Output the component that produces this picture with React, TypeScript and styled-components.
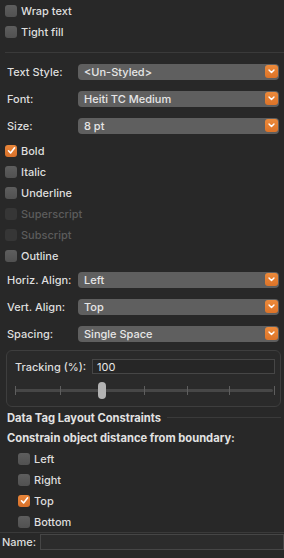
import React from "react";
import styled, { createGlobalStyle } from "styled-components";

const GlobalStyle = createGlobalStyle`
  html, body {
    margin: 0;
    padding: 0;
    background: #282828;
    overflow: hidden;
  }
  body {
    font-family: Inter, "Liberation Sans", sans-serif;
    font-size: 11px;
    color: #dedede;
  }
`;

const Panel = styled.div`
  width: 284px;
  height: 558px;
  display: flex;
  flex-direction: column;
  background: #282828;
  white-space: nowrap;
`;

const CheckRow = styled.label<{ $indent?: number; $disabled?: boolean; $h?: number }>`
  height: ${(p) => p.$h ?? 21}px;
  flex-shrink: 0;
  display: flex;
  align-items: center;
  gap: 4px;
  padding-left: ${(p) => p.$indent ?? 5}px;
  color: ${(p) => (p.$disabled ? "#5c5c5c" : "#dedede")};
  font-weight: 500;
`;

const Box = styled.span<{ $checked?: boolean; $disabled?: boolean }>`
  width: 12px;
  height: 12px;
  border-radius: 3px;
  box-sizing: border-box;
  display: flex;
  align-items: center;
  justify-content: center;
  background: ${(p) =>
    p.$checked
      ? "linear-gradient(#e8863a, #d8702a)"
      : p.$disabled
      ? "#363636"
      : "linear-gradient(#5e5e5e, #515151)"};
`;

const Separator = styled.div<{ $top?: number; $bottom?: number; $left?: number }>`
  height: 1px;
  flex-shrink: 0;
  background: #3a3a3a;
  margin: ${(p) => p.$top ?? 0}px 0 ${(p) => p.$bottom ?? 0}px ${(p) => p.$left ?? 0}px;
`;

const Spacer = styled.div<{ $h: number }>`
  height: ${(p) => p.$h}px;
  flex-shrink: 0;
`;

const FieldRow = styled.div`
  height: 27px;
  flex-shrink: 0;
  display: flex;
  align-items: center;
  padding: 0 5px 0 7px;
`;

const FieldLabel = styled.span`
  width: 71px;
  flex-shrink: 0;
  font-weight: 500;
`;

const Popup = styled.div`
  flex: 1;
  height: 16px;
  border-radius: 4px;
  background: #5f5f5f;
  display: flex;
  align-items: center;
  padding-left: 6px;
  padding-right: 1.5px;
  font-weight: 500;
  color: #e6e6e6;
`;

const PopupText = styled.span`
  flex: 1;
`;

const Arrow = styled.span`
  width: 13px;
  height: 13px;
  border-radius: 3px;
  background: linear-gradient(#ec8a3b, #dc7328);
  display: flex;
  align-items: center;
  justify-content: center;
`;

const TrackBox = styled.div`
  margin: 3px 3px 0 6px;
  height: 57px;
  flex-shrink: 0;
  box-sizing: border-box;
  border: 1px solid #3e3e3e;
  border-radius: 6px;
  background: #2a2a2a;
  padding: 8px 5px 0 8px;
  display: flex;
  flex-direction: column;
`;

const TrackRow = styled.div`
  display: flex;
  align-items: center;
  height: 15px;
`;

const TrackLabel = styled.span`
  width: 77px;
  flex-shrink: 0;
  font-weight: 500;
`;

const TextInput = styled.div<{ $bg?: string; $h?: number }>`
  flex: 1;
  height: ${(p) => p.$h ?? 15}px;
  box-sizing: border-box;
  border: 1px solid #464646;
  background: ${(p) => p.$bg ?? "#262626"};
  display: flex;
  align-items: center;
  padding-left: 4px;
  color: #e6e6e6;
`;

const Slider = styled.div`
  position: relative;
  height: 17px;
  margin: 8px 2px 0 0;
`;

const Track = styled.div`
  position: absolute;
  left: 0;
  right: 0;
  top: 7px;
  height: 3px;
  border-radius: 2px;
  background: #474747;
`;

const Tick = styled.div`
  position: absolute;
  top: 4px;
  width: 1px;
  height: 9px;
  background: #5e5e5e;
`;

const Thumb = styled.div`
  position: absolute;
  top: 0;
  width: 8px;
  height: 17px;
  border-radius: 4px;
  background: #b3b3b3;
`;

const Heading = styled.div<{ $h?: number }>`
  height: ${(p) => p.$h ?? 21}px;
  flex-shrink: 0;
  display: flex;
  align-items: center;
  gap: 6px;
  padding: 0 3px 0 7px;
  font-size: 11.2px;
  font-weight: 700;
  color: #e2e2e2;
`;

const HeadingLine = styled.div`
  flex: 1;
  height: 1px;
  background: #3a3a3a;
`;

const NameRow = styled.div`
  display: flex;
  align-items: center;
  height: 17px;
  flex-shrink: 0;
  padding-left: 2px;
  gap: 4px;
  font-weight: 500;
`;

const Check = () => (
  <svg width="9" height="9" viewBox="0 0 9 9">
    <path d="M1.5 4.8 L3.6 7 L7.6 1.8" fill="none" stroke="#fff" strokeWidth="1.6" strokeLinecap="round" strokeLinejoin="round" />
  </svg>
);

const Chevron = () => (
  <svg width="7" height="5" viewBox="0 0 7 5">
    <path d="M1 1 L3.5 3.6 L6 1" fill="none" stroke="#fff" strokeWidth="1.4" strokeLinecap="round" strokeLinejoin="round" />
  </svg>
);

const CheckItem = ({
  label,
  checked,
  disabled,
  indent,
  h,
}: {
  label: string;
  checked?: boolean;
  disabled?: boolean;
  indent?: number;
  h?: number;
}) => (
  <CheckRow $indent={indent} $disabled={disabled} $h={h}>
    <Box $checked={checked} $disabled={disabled}>{checked && <Check />}</Box>
    {label}
  </CheckRow>
);

const Field = ({ label, value }: { label: string; value: string }) => (
  <FieldRow>
    <FieldLabel>{label}</FieldLabel>
    <Popup>
      <PopupText>{value}</PopupText>
      <Arrow>
        <Chevron />
      </Arrow>
    </Popup>
  </FieldRow>
);

const ticks = [0, 45, 129, 172, 214, 259];

export default function App() {
  return (
    <Panel>
      <GlobalStyle />
      <Spacer $h={0.5} />
      <CheckItem label="Wrap text" h={21.3} />
      <CheckItem label="Tight fill" h={21.3} />
      <Separator $top={9} $bottom={5} $left={5} />
      <Field label="Text Style:" value="<Un-Styled>" />
      <Field label="Font:" value="Heiti TC Medium" />
      <Field label="Size:" value="8 pt" />
      <Spacer $h={1} />
      <CheckItem label="Bold" checked />
      <CheckItem label="Italic" />
      <CheckItem label="Underline" />
      <CheckItem label="Superscript" disabled />
      <CheckItem label="Subscript" disabled />
      <CheckItem label="Outline" />
      <Field label="Horiz. Align:" value="Left" />
      <Field label="Vert. Align:" value="Top" />
      <Field label="Spacing:" value="Single Space" />
      <TrackBox>
        <TrackRow>
          <TrackLabel>Tracking (%):</TrackLabel>
          <TextInput>100</TextInput>
        </TrackRow>
        <Slider>
          <Track />
          {ticks.map((t) => (
            <Tick key={t} style={{ left: t }} />
          ))}
          <Thumb style={{ left: 83 }} />
        </Slider>
      </TrackBox>
      <Heading>
        Data Tag Layout Constraints
        <HeadingLine />
      </Heading>
      <Heading $h={20}>Constrain object distance from boundary:</Heading>
      <CheckItem label="Left" indent={18} />
      <CheckItem label="Right" indent={18} />
      <CheckItem label="Top" indent={18} checked />
      <CheckItem label="Bottom" indent={18} />
      <Separator />
      <NameRow>
        Name:
        <TextInput $bg="#2c2c2c" $h={16} />
      </NameRow>
    </Panel>
  );
}
